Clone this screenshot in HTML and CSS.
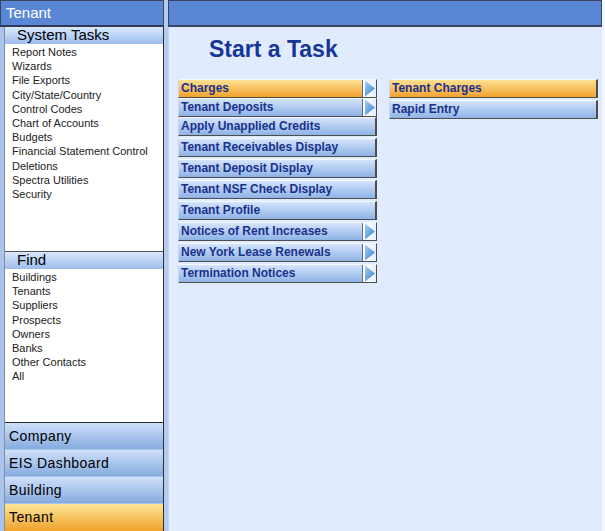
FILE: index.html
```html
<!DOCTYPE html>
<html>
<head>
<meta charset="utf-8">
<link rel="stylesheet" href="styles.css">
</head>
<body>
<div class="app">
  <aside class="sidebar">
    <div class="side-title">Tenant</div>
    <div class="side-panel">
      <section class="group group-tasks">
        <div class="group-head">System Tasks</div>
        <ul class="items">
          <li>Report Notes</li>
          <li>Wizards</li>
          <li>File Exports</li>
          <li>City/State/Country</li>
          <li>Control Codes</li>
          <li>Chart of Accounts</li>
          <li>Budgets</li>
          <li>Financial Statement Control</li>
          <li>Deletions</li>
          <li>Spectra Utilities</li>
          <li>Security</li>
        </ul>
      </section>
      <section class="group group-find">
        <div class="group-head">Find</div>
        <ul class="items">
          <li>Buildings</li>
          <li>Tenants</li>
          <li>Suppliers</li>
          <li>Prospects</li>
          <li>Owners</li>
          <li>Banks</li>
          <li>Other Contacts</li>
          <li>All</li>
        </ul>
      </section>
      <nav class="modules">
        <div class="module">Company</div>
        <div class="module">EIS Dashboard</div>
        <div class="module">Building</div>
        <div class="module active">Tenant</div>
      </nav>
    </div>
  </aside>
  <div class="gutter"></div>
  <main class="main">
    <div class="main-head"></div>
    <div class="main-body">
      <h1 class="title">Start a Task</h1>
      <div class="menus">
        <div class="menu">
          <div class="btn active tight has-arrow"><span class="label">Charges</span><span class="arrow"><svg width="13" height="17" viewBox="0 0 13 17"><defs><linearGradient id="ag1" x1="0" y1="0" x2="1" y2="1"><stop offset="0" stop-color="#a9d2f5"/><stop offset="1" stop-color="#2f7ec9"/></linearGradient></defs><path d="M2 0.5 L12 8.5 L2 16.5 Z" fill="url(#ag1)"/></svg></span></div>
          <div class="btn tight has-arrow"><span class="label">Tenant Deposits</span><span class="arrow"><svg width="13" height="17" viewBox="0 0 13 17"><path d="M2 0.5 L12 8.5 L2 16.5 Z" fill="url(#ag1)"/></svg></span></div>
          <div class="btn"><span class="label">Apply Unapplied Credits</span></div>
          <div class="btn"><span class="label">Tenant Receivables Display</span></div>
          <div class="btn"><span class="label">Tenant Deposit Display</span></div>
          <div class="btn"><span class="label">Tenant NSF Check Display</span></div>
          <div class="btn"><span class="label">Tenant Profile</span></div>
          <div class="btn has-arrow"><span class="label">Notices of Rent Increases</span><span class="arrow"><svg width="13" height="17" viewBox="0 0 13 17"><path d="M2 0.5 L12 8.5 L2 16.5 Z" fill="url(#ag1)"/></svg></span></div>
          <div class="btn has-arrow"><span class="label">New York Lease Renewals</span><span class="arrow"><svg width="13" height="17" viewBox="0 0 13 17"><path d="M2 0.5 L12 8.5 L2 16.5 Z" fill="url(#ag1)"/></svg></span></div>
          <div class="btn has-arrow"><span class="label">Termination Notices</span><span class="arrow"><svg width="13" height="17" viewBox="0 0 13 17"><path d="M2 0.5 L12 8.5 L2 16.5 Z" fill="url(#ag1)"/></svg></span></div>
        </div>
        <div class="menu submenu">
          <div class="btn active"><span class="label">Tenant Charges</span></div>
          <div class="btn"><span class="label">Rapid Entry</span></div>
        </div>
      </div>
    </div>
  </main>
</div>
</body>
</html>
```
FILE: styles.css
```css
* { box-sizing: border-box; }
html, body { margin: 0; padding: 0; }
body {
  width: 605px;
  height: 531px;
  overflow: hidden;
  font-family: Tahoma, "Liberation Sans", Arial, sans-serif;
  background: #e0ecfe;
}
.app {
  display: flex;
  width: 605px;
  height: 531px;
}
.sidebar {
  width: 164px;
  display: flex;
  flex-direction: column;
  background: #a9c4ee;
}
.side-title {
  height: 27px;
  background: #5a87d5;
  border: 1px solid #3b4760;
  border-bottom: 2px solid #2f3a52;
  color: #fff;
  font-size: 15px;
  line-height: 24px;
  padding-left: 5px;
}
.side-panel {
  flex: 1;
  margin-left: 4px;
  display: flex;
  flex-direction: column;
  background: #fff;
  border-left: 1px solid #8d8d8d;
  border-right: 1px solid #2e2e2e;
}
.group { display: flex; flex-direction: column; }
.group-tasks { height: 224px; }
.group-find { height: 171px; border-top: 1px solid #555; }
.group-head {
  height: 17px;
  background: linear-gradient(#d9e8fc, #9dbdec);
  color: #000;
  font-size: 15px;
  line-height: 16px;
  padding-left: 12px;
}
.items {
  list-style: none;
  margin: 0;
  padding: 1px 0 0 7px;
  font-size: 11px;
  line-height: 14.2px;
  color: #222;
}
.modules {
  border-top: 1px solid #2e2e2e;
  display: flex;
  flex-direction: column;
}
.module {
  height: 27px;
  background: linear-gradient(#cfe0fa, #85abdf);
  border-bottom: 1px solid #a9c4ee;
  font-size: 14px;
  letter-spacing: 0.4px;
  line-height: 27px;
  padding-left: 4px;
  color: #000;
}
.module.active {
  background: linear-gradient(#fde596, #f0a22c);
  border-bottom: none;
}
.gutter {
  width: 4px;
  background: #b5ccf0;
}
.main {
  flex: 1;
  display: flex;
  flex-direction: column;
  border-right: 3px solid #f2f6fd;
}
.main-head {
  height: 27px;
  background: #5a87d5;
  border: 1px solid #3b4760;
  border-bottom: 2px solid #3b4760;
}
.main-body {
  flex: 1;
  background: #e0ecfe;
  border-left: 1px solid #c3d6f2;
  padding: 10px 0 0 9px;
}
.title {
  margin: 0 0 17px 31px;
  font-family: "Liberation Sans", Arial, sans-serif;
  font-size: 23px;
  font-weight: bold;
  line-height: 25px;
  color: #173597;
}
.menus {
  display: flex;
  gap: 12px;
  align-items: flex-start;
}
.menu {
  width: 199px;
  display: flex;
  flex-direction: column;
}
.submenu { width: 209px; }
.btn {
  height: 19px;
  display: flex;
  background: linear-gradient(#d4e4fb, #8fb3e6);
  border-top: 1px solid #f4f8ff;
  border-left: 1px solid #c7d8f3;
  border-right: 2px solid #4d4d4d;
  border-bottom: 1px solid #4d4d4d;
  font-family: "Liberation Sans", Arial, sans-serif;
  font-size: 12px;
  font-weight: bold;
  color: #1a318c;
  margin-top: 2px;
}
.btn:first-child { margin-top: 0; }
.btn.tight + .btn { margin-top: 0; }
.btn.active {
  background: linear-gradient(#fde193, #f2a22e);
}
.label {
  flex: 1;
  padding-left: 2px;
  line-height: 17px;
  white-space: nowrap;
}
.has-arrow { border-right-width: 1px; }
.arrow {
  width: 14px;
  border-left: 1px solid #5c6e8c;
  background: linear-gradient(90deg, #ffffff, #e6effc);
  display: flex;
  align-items: center;
  justify-content: flex-start;
}
.arrow svg { display: block; }
```
